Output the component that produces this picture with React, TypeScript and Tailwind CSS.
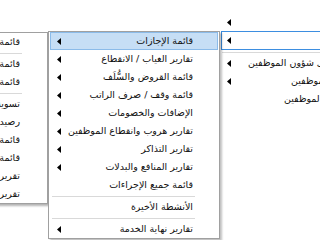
import React from 'react'

type Item = { label?: string; arrow?: boolean; active?: boolean; sep?: boolean }

const Arrow = ({ hidden = false }: { hidden?: boolean }) => (
  <svg width="4" height="7" viewBox="0 0 4 7" className={hidden ? 'invisible shrink-0' : 'shrink-0'}>
    <polygon points="4,0 4,7 0,3.5" fill="#000" />
  </svg>
)

// rtl popup menu: text on the right, submenu arrow on the left
const MenuRow = ({ item, padRight }: { item: Item; padRight: string }) => {
  if (item.sep) {
    return (
      <div className="h-[4px] flex items-center" dir="ltr">
        <div className={`h-px flex-1 bg-[#d9d9d9] ml-[3px] ${padRight}`} />
      </div>
    )
  }
  return (
    <div
      dir="ltr"
      className={
        'mx-[1px] h-[18px] flex items-center justify-between border pl-[6px] ' +
        (item.active ? 'bg-[#c6def5] border-[#8bbbe9]' : 'border-transparent')
      }
    >
      <Arrow hidden={!item.arrow} />
      <span dir="rtl" className={`whitespace-nowrap leading-none ${padRight}`}>
        {item.label}
      </span>
    </div>
  )
}

const mainItems: Item[] = [
  { label: 'قائمة الإجازات', arrow: true, active: true },
  { label: 'تقارير الغياب / الانقطاع', arrow: true },
  { label: 'قائمة القروض والسُّلَف', arrow: true },
  { label: 'قائمة وقف / صرف الراتب', arrow: true },
  { label: 'الإضافات والخصومات', arrow: true },
  { label: 'تقارير هروب وانقطاع الموظفين', arrow: true },
  { label: 'تقارير التذاكر', arrow: true },
  { label: 'تقارير المنافع والبدلات', arrow: true },
  { label: 'قائمة جميع الإجراءات' },
  { sep: true },
  { label: 'الأنشطة الأخيرة' },
  { sep: true },
  { label: 'تقارير نهاية الخدمة', arrow: true },
]

const leftItems: Item[] = [
  { label: 'قائمة الإجازات المعتمدة' },
  { sep: true },
  { label: 'قائمة طلبات الإجازة' },
  { label: 'قائمة العائدين من الإجازة' },
  { sep: true },
  { label: 'تسوية رصيد الإجازات' },
  { label: 'رصيد الإجازات' },
  { label: 'قائمة المتأخرين عن العودة' },
  { label: 'قائمة الإجازات المرحّلة' },
  { label: 'تقرير الإجازات السنوية' },
  { label: 'تقرير الإجازات المرضية' },
]

export default function App() {
  return (
    <div className="relative w-[320px] h-[240px] overflow-hidden bg-white text-[9.5px] text-[#111] font-['DejaVu_Sans',sans-serif]">
      {/* parent menu, mostly off to the right */}
      <div className="absolute left-[220px] top-[13px] w-[200px] bg-white">
        <div className="mx-[1px] h-[18px] flex items-center border border-transparent pl-[5px]">
          <Arrow />
        </div>
        <div className="mx-[1px] h-[19px] flex items-center border border-[#3d8ee0] pl-[5px]">
          <Arrow />
        </div>
        <div className="h-[4px] flex items-center">
          <div className="h-px flex-1 bg-[#d9d9d9] ml-[2px]" />
        </div>
        <div className="mx-[1px] h-[18px] flex items-center border border-transparent pl-[5px]">
          <Arrow />
          <span dir="rtl" className="whitespace-nowrap leading-none ml-[17px]">طلب إحالة إلى شؤون الموظفين</span>
        </div>
        <div className="mx-[1px] h-[18px] flex items-center border border-transparent pl-[5px]">
          <Arrow />
          <span dir="rtl" className="whitespace-nowrap leading-none ml-[60px]">تقارير الموظفين</span>
        </div>
        <div className="mx-[1px] h-[18px] flex items-center border border-transparent pl-[5px]">
          <Arrow hidden />
          <span dir="rtl" className="whitespace-nowrap leading-none ml-[53px]">بيانات الموظفين</span>
        </div>
      </div>

      {/* leave submenu, cut off at the left */}
      <div className="absolute left-[-100px] top-[32px] w-[148px] bg-white border border-[#a0a0a0] shadow-[2px_2px_2px_rgba(0,0,0,0.3)]">
        {leftItems.map((it, i) => (
          <MenuRow key={i} item={it} padRight="mr-[25px]" />
        ))}
      </div>

      {/* reports submenu */}
      <div className="absolute left-[48px] top-[31px] w-[172px] bg-white border border-[#a0a0a0] shadow-[2px_2px_2px_rgba(0,0,0,0.25)]">
        {mainItems.map((it, i) => (
          <MenuRow key={i} item={it} padRight="mr-[24px]" />
        ))}
      </div>
    </div>
  )
}
